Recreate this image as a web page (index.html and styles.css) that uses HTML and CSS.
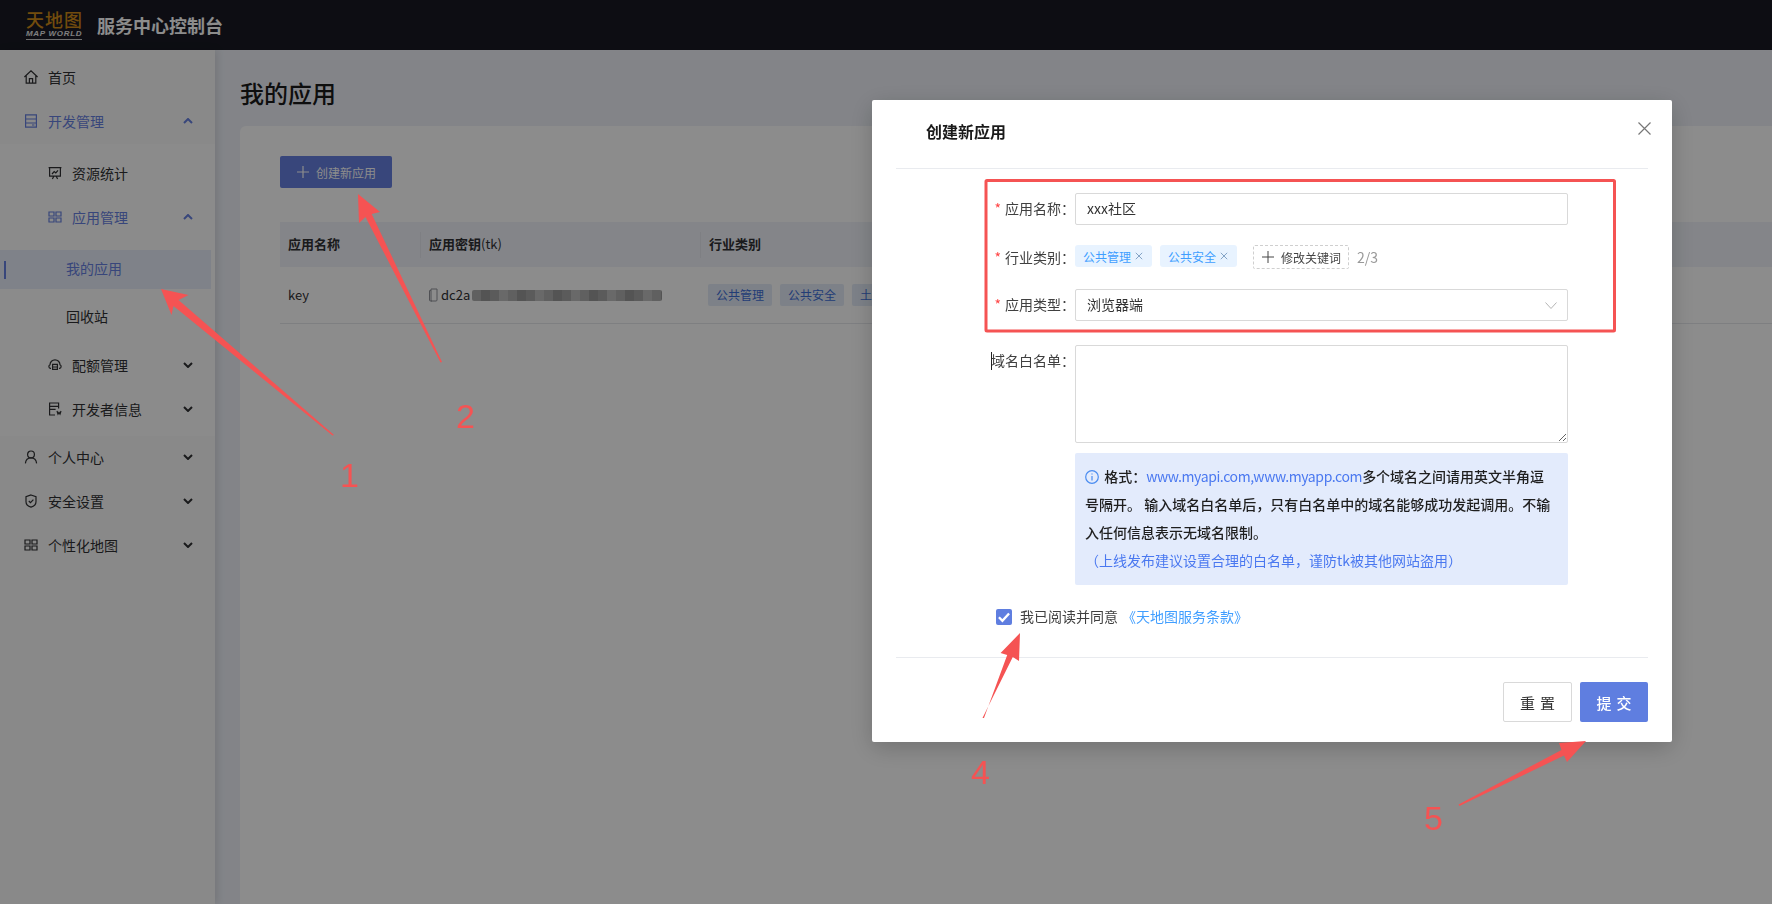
FILE: index.html
```html
<!DOCTYPE html>
<html lang="zh-CN">
<head>
    <meta charset="UTF-8">
    <title>服务中心控制台</title>
    <link rel="stylesheet" href="styles.css">
</head>
<body>
    <header class="topbar">
        <div class="logo">
            <div class="logo-cn">天地图</div>
            <div class="logo-en">MAP WORLD</div>
        </div>
        <div class="topbar-title">服务中心控制台</div>
    </header>

    <div class="layout">
        <aside class="sidebar">
            <div class="nav-item">
                <svg class="nav-icon" viewBox="0 0 14 14"><path d="M.4 7 7 .8l6.600 6.200M2.200 5.600v7.600h9.600V5.600M5.400 13.200V8.600h3.200v4.600"/></svg>
                <span>首页</span>
            </div>
            <div class="nav-item is-open">
                <svg class="nav-icon" viewBox="0 0 14 14"><path d="M1.600.8h10.800v12.400H1.600zM1.600 5h10.800M1.600 9h10.800M8 11h2.400"/></svg>
                <span>开发管理</span>
                <svg class="chevron" viewBox="0 0 10 6"><path d="M1 5l4-4 4 4"/></svg>
            </div>
            <div class="submenu">
                <div class="nav-item sub-item">
                    <svg class="nav-icon" viewBox="0 0 14 14"><path d="M.6 1.600h12.800M1.600 1.600v8.600h10.800V1.600M4 8l2.200-2.400 1.600 1.400L10 4.400M4.400 13l1.400-2.800M9.600 13l-1.400-2.800"/></svg>
                    <span>资源统计</span>
                </div>
                <div class="nav-item sub-item is-open">
                    <svg class="nav-icon" viewBox="0 0 14 14"><path d="M1 2h5v4H1zM8 2h5v4H8zM1 8h5v4H1zM8 8h5v4H8z"/></svg>
                    <span>应用管理</span>
                    <svg class="chevron" viewBox="0 0 10 6"><path d="M1 5l4-4 4 4"/></svg>
                </div>
                <div class="subsub">
                    <div class="leaf is-active">我的应用</div>
                    <div class="leaf">回收站</div>
                </div>
                <div class="nav-item sub-item">
                    <svg class="nav-icon" viewBox="0 0 14 14"><path d="M3 10.400H2.400a1.900 1.900 0 0 1-.4-3.600 5 5 0 0 1 10 0 1.900 1.900 0 0 1-.4 3.600H11M4.600 6.400h4.800v5H4.600zM4.600 9h4.800"/></svg>
                    <span>配额管理</span>
                    <svg class="chevron" viewBox="0 0 10 6"><path d="M1 1l4 4 4-4"/></svg>
                </div>
                <div class="nav-item sub-item">
                    <svg class="nav-icon" viewBox="0 0 14 14"><path d="M7 13H1.600V1h9v5.400M1.600 4.400h9M1.600 7.400h6M9 9l1 3 1-1.600 1 1.600 1-3"/></svg>
                    <span>开发者信息</span>
                    <svg class="chevron" viewBox="0 0 10 6"><path d="M1 1l4 4 4-4"/></svg>
                </div>
            </div>
            <div class="nav-item">
                <svg class="nav-icon" viewBox="0 0 14 14"><circle cx="7" cy="4.400" r="3.400"/><path d="M1.400 13.400c.3-3.400 2.600-5.600 5.600-5.600s5.300 2.200 5.600 5.600"/></svg>
                <span>个人中心</span>
                <svg class="chevron" viewBox="0 0 10 6"><path d="M1 1l4 4 4-4"/></svg>
            </div>
            <div class="nav-item">
                <svg class="nav-icon" viewBox="0 0 14 14"><path d="M7 1l5 1.600v5.200c0 2.800-2.200 4.600-5 5.400-2.800-.8-5-2.600-5-5.400V2.600zM4.800 7l1.700 1.700 2.900-3"/></svg>
                <span>安全设置</span>
                <svg class="chevron" viewBox="0 0 10 6"><path d="M1 1l4 4 4-4"/></svg>
            </div>
            <div class="nav-item">
                <svg class="nav-icon" viewBox="0 0 14 14"><path d="M1 2h5v4H1zM8 2h5v4H8zM1 8h5v4H1zM8 8h5v4H8z"/></svg>
                <span>个性化地图</span>
                <svg class="chevron" viewBox="0 0 10 6"><path d="M1 1l4 4 4-4"/></svg>
            </div>
        </aside>

        <main class="content">
            <h1 class="page-title">我的应用</h1>
            <section class="card">
                <button class="btn-create">
                    <svg class="plus" viewBox="0 0 14 14"><path d="M7 1v12M1 7h12"/></svg>
                    创建新应用
                </button>
                <div class="table">
                    <div class="table-row table-head">
                        <div class="cell">应用名称</div>
                        <div class="cell">应用密钥<span class="head-tk">(tk)</span></div>
                        <div class="cell">行业类别</div>
                    </div>
                    <div class="table-row">
                        <div class="cell cell-key">key</div>
                        <div class="cell cell-tk">
                            <svg class="copy" viewBox="0 0 10 14"><path d="M3 1h6v11a1 1 0 0 1-1 1H3zM3 2.600H1.500v9.400a1 1 0 0 0 1 1H4"/></svg>
                            dc2a<span class="blurred"></span>
                        </div>
                        <div class="cell cell-tags">
                            <span class="tbl-tag">公共管理</span>
                            <span class="tbl-tag">公共安全</span>
                            <span class="tbl-tag">土地管理</span>
                        </div>
                    </div>
                </div>
            </section>
        </main>
    </div>

    <div class="mask">
        <div class="modal">
            <div class="modal-head">
                <div class="modal-title">创建新应用</div>
                <svg class="modal-close" viewBox="0 0 13 13"><path d="M.5.500l12 12M12.500.500l-12 12"/></svg>
            </div>

            <div class="form-row">
                <label class="form-label required">应用名称：</label>
                <div class="input">xxx社区</div>
            </div>
            <div class="form-row tag-row">
                <label class="form-label required">行业类别：</label>
                <span class="tag">公共管理<svg class="tag-x" viewBox="0 0 10 10"><path d="M1 1l8 8M9 1l-8 8"/></svg></span>
                <span class="tag">公共安全<svg class="tag-x" viewBox="0 0 10 10"><path d="M1 1l8 8M9 1l-8 8"/></svg></span>
                <span class="btn-keyword">
                    <svg class="plus-small" viewBox="0 0 12 12"><path d="M6 0v12M0 6h12"/></svg>
                    修改关键词
                </span>
                <span class="count">2/3</span>
            </div>
            <div class="form-row select-row">
                <label class="form-label required">应用类型：</label>
                <div class="input select">
                    <span>浏览器端</span>
                    <svg class="select-arrow" viewBox="0 0 12 7"><path d="M.5.500 6 6.500l5.500-6"/></svg>
                </div>
            </div>
            <div class="form-row">
                <label class="form-label label-caret">域名白名单：</label>
                <textarea class="textarea"></textarea>
            </div>

            <div class="info">
                <div class="info-line">
                    <svg class="info-icon" viewBox="0 0 14 14"><circle cx="7" cy="7" r="6.300"/><path d="M7 6v4.500M7 3.400v1.200"/></svg>
                    格式：<a class="info-link info-url">www.myapi.com,www.myapp.com</a>多个域名之间请用英文半角逗
                </div>
                <div class="info-line">号隔开。 输入域名白名单后，只有白名单中的域名能够成功发起调用。不输</div>
                <div class="info-line">入任何信息表示无域名限制。</div>
                <div class="info-line"><a class="info-link">（上线发布建议设置合理的白名单，谨防tk被其他网站盗用）</a></div>
            </div>

            <div class="agree">
                <span class="checkbox"><svg viewBox="0 0 12 12"><path d="M2.200 6.200l2.600 2.600 5-5.400"/></svg></span>
                <span class="agree-text">我已阅读并同意</span>
                <a class="agree-link">《天地图服务条款》</a>
            </div>

            <div class="modal-foot">
                <button class="btn-reset">重置</button>
                <button class="btn-submit">提交</button>
            </div>
        </div>
    </div>

    <svg class="notes" viewBox="0 0 1772 904">
        <rect class="note-box" x="986" y="180.500" width="628.500" height="150.500" rx="1"/>
        <polygon class="note-arrow" points="334,435 332.500,435.500 173.500,306 171.500,315 161,289 188.500,295 178.500,300"/>
        <polygon class="note-arrow" points="442,362 440.500,362.500 365.500,217 359,223 358,194 380,212 371.700,214"/>
        <polygon class="note-arrow" points="984,718 982.500,718 1012.800,657 1019,661 1020,633 1000.600,653 1007.200,655"/>
        <polygon class="note-arrow" points="1459.500,806 1458.500,804.500 1561.500,750 1559,743 1586,741 1567,762 1564,755.500"/>
        <text class="note-num" x="340" y="487">1</text>
        <text class="note-num" x="456" y="428">2</text>
        <text class="note-num" x="971" y="784">4</text>
        <text class="note-num" x="1424" y="830">5</text>
    </svg>
</body>
</html>
```

FILE: styles.css
```css
* {
    box-sizing: border-box;
}

html, body {
    height: 100%;
}

body {
    margin: 0;
    overflow: hidden;
    font-family: "Noto Sans CJK SC", "Noto Sans", sans-serif;
    font-size: 14px;
    color: #303133;
    background: #eef1f8;
}

/* top bar */
.topbar {
    height: 50px;
    background: #181923;
    display: flex;
    align-items: center;
    padding-left: 26px;
}

.logo {
    width: 71px;
    color: #d08a18;
}

.logo-cn {
    font-size: 18px;
    font-weight: 500;
    line-height: 20px;
    letter-spacing: 1px;
    margin-top: -2px;
}

.logo-en {
    width: 56px;
    font-family: "Liberation Sans", sans-serif;
    font-size: 8px;
    font-weight: 700;
    font-style: italic;
    line-height: 10px;
    letter-spacing: .7px;
    white-space: nowrap;
    color: #e6e6e6;
    border-bottom: 1px solid #c8c8c8;
}

.topbar-title {
    font-size: 18px;
    font-weight: 700;
    color: #fff;
}

.layout {
    display: flex;
    height: calc(100vh - 50px);
}

/* left menu */
.sidebar {
    width: 215px;
    flex-shrink: 0;
    padding-top: 6px;
    background: #f9f9f9;
    box-shadow: 2px 0 8px rgba(0, 0, 0, .12);
    position: relative;
}

.nav-item {
    height: 44px;
    display: flex;
    align-items: center;
    gap: 10px;
    padding: 0 22px 0 24px;
}

.nav-item span {
    margin-top: -3px;
}

.nav-item.is-open {
    color: #6680e0;
}

.sub-item {
    padding-left: 48px;
}

.nav-icon {
    width: 14px;
    height: 14px;
    margin-top: -2px;
    flex-shrink: 0;
    fill: none;
    stroke: currentColor;
    stroke-width: 1.200;
}

.chevron {
    width: 10px;
    height: 6px;
    margin: -2px 0 0 auto;
    fill: none;
    stroke: currentColor;
    stroke-width: 2;
}

.submenu {
    background: #fdfdfd;
    padding: 8px 0 4px;
}

.subsub {
    padding: 10px 0 6px;
}

.leaf {
    height: 40px;
    line-height: 37px;
    padding-left: 66px;
    margin-bottom: 8px;
}

.leaf:last-child {
    margin-bottom: 0;
}

.leaf.is-active {
    width: 211px;
    height: 39px;
    margin-bottom: 9px;
    color: #6680e0;
    background: #e8edfa;
    position: relative;
}

.leaf.is-active::before {
    content: "";
    position: absolute;
    left: 4px;
    top: 11px;
    width: 2px;
    height: 18px;
    background: #6680e0;
}

/* main area */
.content {
    flex: 1;
    padding-left: 25px;
    min-width: 0;
}

.page-title {
    margin: 0;
    height: 76px;
    padding-top: 25px;
    font-size: 24px;
    font-weight: 500;
    line-height: 36px;
    color: #1a1a1a;
}

.card {
    height: calc(100vh - 126px);
    background: #fff;
    border-top-left-radius: 6px;
    padding: 30px 0 0 40px;
}

.btn-create {
    width: 112px;
    height: 32px;
    display: flex;
    align-items: center;
    justify-content: center;
    gap: 6px;
    border: none;
    border-radius: 2px;
    background: #6680e0;
    color: #fff;
    font-family: inherit;
    font-size: 12px;
}

.plus {
    width: 14px;
    height: 14px;
    fill: none;
    stroke: currentColor;
    stroke-width: 1.200;
}

.table {
    margin-top: 34px;
    font-size: 13px;
}

.table-row {
    display: grid;
    grid-template-columns: 140px 280px 1fr;
    height: 57px;
    align-items: center;
    border-bottom: 1px solid #e6e8ec;
}

.table-head {
    height: 45px;
    background: #f0f3fa;
    border-bottom: none;
    font-weight: 700;
}

.table-head .cell {
    padding-bottom: 2px;
}

.table-head .cell + .cell {
    border-left: 1px solid #e6e8ee;
}

.head-tk {
    font-weight: 400;
}

.cell {
    padding-left: 8px;
    line-height: 24px;
}

.cell-tk {
    display: flex;
    align-items: center;
}

.copy {
    width: 10px;
    height: 14px;
    margin-right: 3px;
    fill: none;
    stroke: #909399;
}

.blurred {
    width: 190px;
    height: 11px;
    margin-left: 2px;
    border-radius: 2px;
    background: repeating-linear-gradient(90deg, #b0b0b0 0 9px, #9a9a9a 9px 18px, #a6a6a6 18px 27px, #c0c0c0 27px 36px);
}

.cell-tags {
    display: flex;
    gap: 8px;
    overflow: hidden;
}

.tbl-tag {
    height: 22px;
    padding: 0 8px;
    font-size: 12px;
    line-height: 22px;
    border-radius: 2px;
    color: #3f6fd8;
    background: #e3ebf7;
    white-space: nowrap;
}

/* dialog */
.mask {
    position: fixed;
    inset: 0;
    padding: 100px 0 0 872px;
    background: rgba(0, 0, 0, .45);
}

.modal {
    width: 800px;
    height: 642px;
    background: #fff;
    border-radius: 2px;
    box-shadow: 0 6px 24px rgba(0, 0, 0, .2);
}

.modal-head {
    height: 69px;
    margin: 0 24px;
    padding: 19px 21px 0 30px;
    display: flex;
    justify-content: space-between;
    align-items: flex-start;
    border-bottom: 1px solid #e9ebef;
}

.modal-title {
    font-size: 16px;
    font-weight: 700;
    line-height: 24px;
    color: #1a1a1a;
}

.modal-close {
    width: 13px;
    height: 13px;
    margin: 3px -24px 0 0;
    fill: none;
    stroke: #777;
    stroke-width: 1.200;
}

.form-row {
    display: flex;
    margin: 24px 0 0 0;
    padding-left: 203px;
    padding-right: 104px;
    position: relative;
}

.tag-row {
    margin-top: 20px;
    height: 24px;
    align-items: flex-start;
}

.select-row {
    margin-top: 20px;
}

.form-label {
    position: absolute;
    right: 597px;
    top: 0;
    line-height: 30px;
    white-space: nowrap;
    color: #404040;
}

.tag-row .form-label {
    line-height: 24px;
}

.required::before {
    content: "*";
    color: #f44;
    margin-right: 4px;
}

.label-caret::before {
    content: "";
    position: absolute;
    left: 0;
    top: 7px;
    height: 18px;
    border-left: 1px solid #222;
}

.input {
    flex: 1;
    height: 32px;
    padding-left: 11px;
    line-height: 28px;
    border: 1px solid #d9d9d9;
    border-radius: 2px;
    color: #333;
}

.select {
    display: flex;
    justify-content: space-between;
    align-items: flex-start;
    padding-right: 10px;
}

.select-arrow {
    width: 12px;
    height: 7px;
    margin-top: 12px;
    fill: none;
    stroke: #b4b4b4;
}

.tag {
    width: 77px;
    height: 22px;
    margin-right: 8px;
    padding-left: 8px;
    display: flex;
    align-items: center;
    gap: 4px;
    font-size: 12px;
    color: #409eff;
    background: #e8f3ff;
    border-radius: 3px;
}

.tag-x {
    width: 8px;
    height: 8px;
    fill: none;
    stroke: #6a8fb8;
}

.btn-keyword {
    width: 96px;
    height: 24px;
    margin-left: 8px;
    padding-left: 8px;
    display: flex;
    align-items: center;
    gap: 7px;
    font-size: 12px;
    color: #444;
    border: 1px dashed #cfcfcf;
    border-radius: 2px;
}

.plus-small {
    width: 12px;
    height: 12px;
    fill: none;
    stroke: #444;
}

.count {
    margin-left: 8px;
    line-height: 24px;
    color: #999;
}

.textarea {
    flex: 1;
    height: 98px;
    border: 1px solid #d9d9d9;
    border-radius: 2px;
    outline: none;
    font-family: inherit;
}

.info {
    margin: 10px 104px 0 203px;
    height: 132px;
    padding: 9px 10px;
    font-weight: 500;
    line-height: 28px;
    color: #1f1f1f;
    background: #e3ebfc;
    border-radius: 2px;
}

.info-line {
    white-space: nowrap;
}

.info-icon {
    width: 14px;
    height: 14px;
    margin-right: 2px;
    vertical-align: -2px;
    fill: none;
    stroke: #4a8cf0;
    stroke-width: 1.200;
}

.info-link {
    font-weight: 400;
    color: #4a78f0;
}

.info-url {
    letter-spacing: -.4px;
}

.agree {
    margin: 24px 0 0 124px;
    height: 16px;
    display: flex;
    align-items: center;
    line-height: 16px;
    color: #404040;
}

.checkbox {
    width: 16px;
    height: 16px;
    margin-right: 8px;
    border-radius: 2px;
    background: #5f7ee0;
}

.checkbox svg {
    display: block;
    width: 16px;
    height: 16px;
    fill: none;
    stroke: #fff;
    stroke-width: 1.800;
}

.agree-text,
.agree-link {
    margin-top: -2px;
}

.agree-link {
    margin-left: 4px;
    color: #409eff;
}

.modal-foot {
    margin: 32px 24px 0;
    padding-top: 24px;
    display: flex;
    justify-content: flex-end;
    gap: 8px;
    border-top: 1px solid #e9ebef;
}

.btn-reset,
.btn-submit {
    width: 68px;
    height: 40px;
    padding: 0 0 0 5px;
    font-family: inherit;
    font-size: 15px;
    letter-spacing: 5px;
    border-radius: 2px;
}

.btn-reset {
    width: 69px;
    color: #333;
    background: #fff;
    border: 1px solid #d9d9d9;
}

.btn-submit {
    font-weight: 500;
    color: #fff;
    background: #5f7ee0;
    border: none;
}

/* red marks drawn over the screenshot */
.notes {
    position: fixed;
    left: 0;
    top: 0;
    width: 1772px;
    height: 904px;
    pointer-events: none;
}

.note-box {
    fill: none;
    stroke: #f55353;
    stroke-width: 3;
}

.note-arrow {
    fill: #f55353;
}

.note-num {
    font-family: "Liberation Sans", sans-serif;
    font-size: 34px;
    fill: #f55353;
}
```
